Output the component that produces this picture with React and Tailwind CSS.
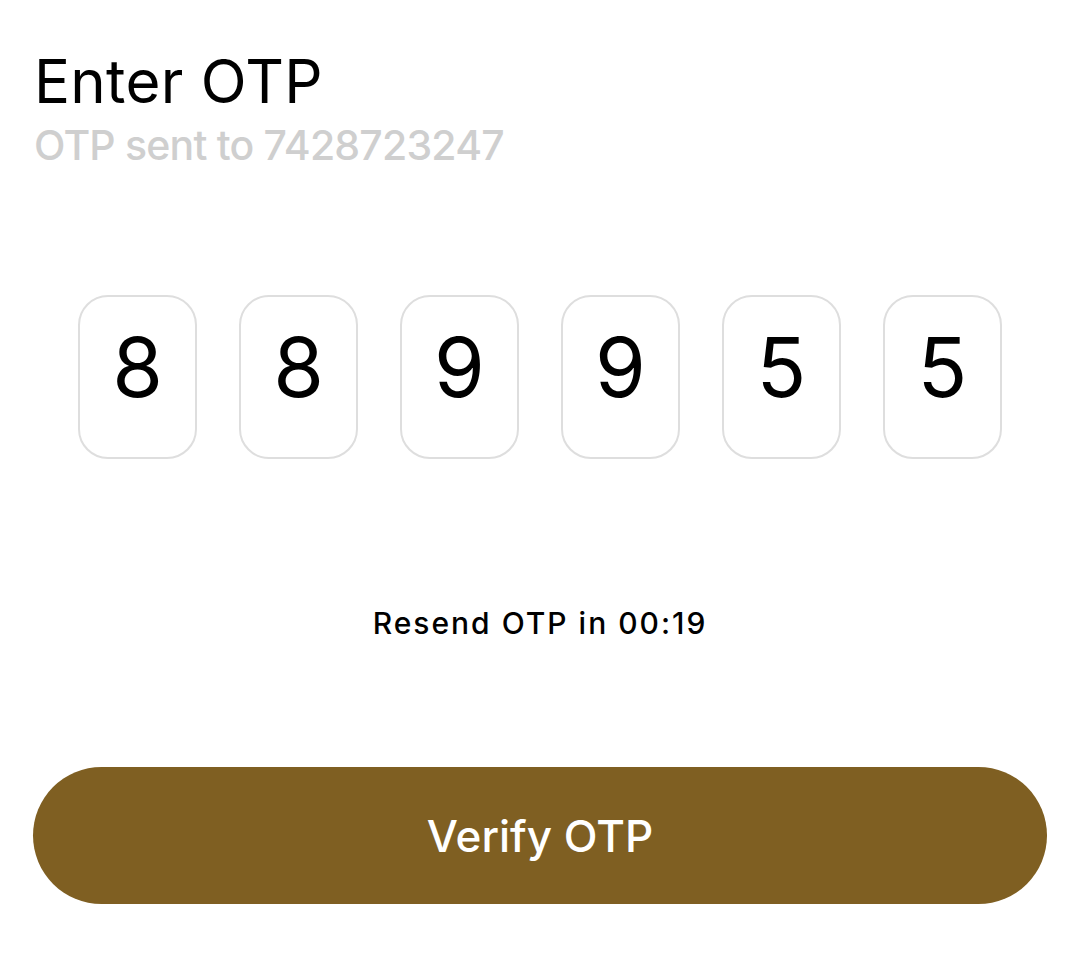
export default function App() {
  const digits = ["8", "8", "9", "9", "5", "5"];
  return (
    <div className="w-[1080px] h-[959px] bg-white" style={{ fontFamily: "Inter, 'Open Sans', sans-serif" }}>
      <div className="pl-[34px] pt-[47px]">
        <h1 className="text-[60px] leading-[68px] text-black font-normal tracking-[0.3px]">Enter OTP</h1>
        <p className="mt-[6px] text-[41px] leading-[48px] text-[#cfcfcf] font-medium tracking-[-0.8px]">OTP sent to 7428723247</p>
      </div>
      <div className="flex justify-center gap-[42px] mt-[126px]">
        {digits.map((d, i) => (
          <div
            key={i}
            className="w-[119px] h-[164px] rounded-[30px] border-2 border-[#dedede] flex justify-center pt-[26px] text-[82px] leading-[90px] text-black"
          >
            {d}
          </div>
        ))}
      </div>
      <p className="mt-[146px] text-center text-[30px] leading-[36px] tracking-[2px] text-black font-medium">
        Resend OTP in 00:19
      </p>
      <div className="mx-[33px] mt-[126px] h-[137px] rounded-full bg-[#7f5f22] flex items-center justify-center">
        <span className="text-white text-[44px] font-medium">Verify OTP</span>
      </div>
    </div>
  );
}
